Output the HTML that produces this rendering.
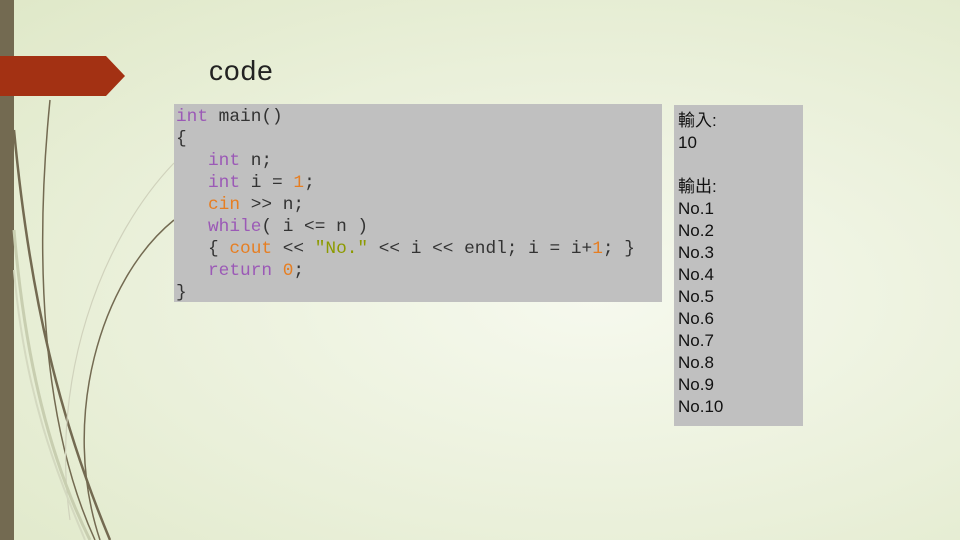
<!DOCTYPE html>
<html><head><meta charset="utf-8"><style>
body{margin:0;width:960px;height:540px;overflow:hidden;position:relative;
background:radial-gradient(ellipse at 62% 55%,#f6f9ee 0%,#eaf0da 55%,#dfe8c8 100%);font-family:"Liberation Sans","Noto Sans CJK TC",sans-serif}
.bar{position:absolute;left:0;top:0;width:14px;height:540px;background:#736a51}
.code{position:absolute;left:174px;top:104px;width:488px;height:198px;background:#c0c0c0;
font-family:"Liberation Mono",monospace;font-size:17.8px;line-height:22px;color:#333;white-space:pre;padding-top:2px;box-sizing:border-box;padding-left:2px}
.k{color:#9b59b6}.o{color:#e67e22}.s{color:#8c9a00}
.out{position:absolute;left:674px;top:105px;width:129px;height:321px;background:#c0c0c0;font-size:17px;line-height:22px;color:#111;padding:5px 0 0 4px;box-sizing:border-box}
.title{position:absolute;left:209px;top:55px;font-size:28px;color:#222;letter-spacing:1px}
</style></head><body>
<div class="bar"></div>
<svg width="960" height="540" style="position:absolute;left:0;top:0">
<path d="M14 130 C30 300 60 420 110 540" stroke="#736a51" stroke-width="2.5" fill="none"/>
<path d="M50 100 C35 250 40 420 95 540" stroke="#736a51" stroke-width="1.5" fill="none"/>
<path d="M174 220 C100 280 60 420 100 540" stroke="#736a51" stroke-width="1.5" fill="none"/>
<path d="M174 163 C100 240 50 380 70 520" stroke="#d0d2bc" stroke-width="1.2" fill="none"/>
<path d="M14 230 C25 360 50 460 90 540" stroke="#c8ceb0" stroke-width="3" fill="none"/>
<path d="M14 270 C25 400 60 480 85 540" stroke="#d4d9c0" stroke-width="2" fill="none"/>
<polygon points="0,56 106,56 125,76 106,96 0,96" fill="#a33113"/>
</svg>
<div class="title">code</div>
<div class="code"><span class="k">int</span> main()
{
   <span class="k">int</span> n;
   <span class="k">int</span> i = <span class="o">1</span>;
   <span class="o">cin</span> &gt;&gt; n;
   <span class="k">while</span>( i &lt;= n )
   { <span class="o">cout</span> &lt;&lt; <span class="s">"No."</span> &lt;&lt; i &lt;&lt; endl; i = i+<span class="o">1</span>; }
   <span class="k">return</span> <span class="o">0</span>;
}</div>
<div class="out">輸入:<br>10<br><br>輸出:<br>No.1<br>No.2<br>No.3<br>No.4<br>No.5<br>No.6<br>No.7<br>No.8<br>No.9<br>No.10</div>
</body></html>
